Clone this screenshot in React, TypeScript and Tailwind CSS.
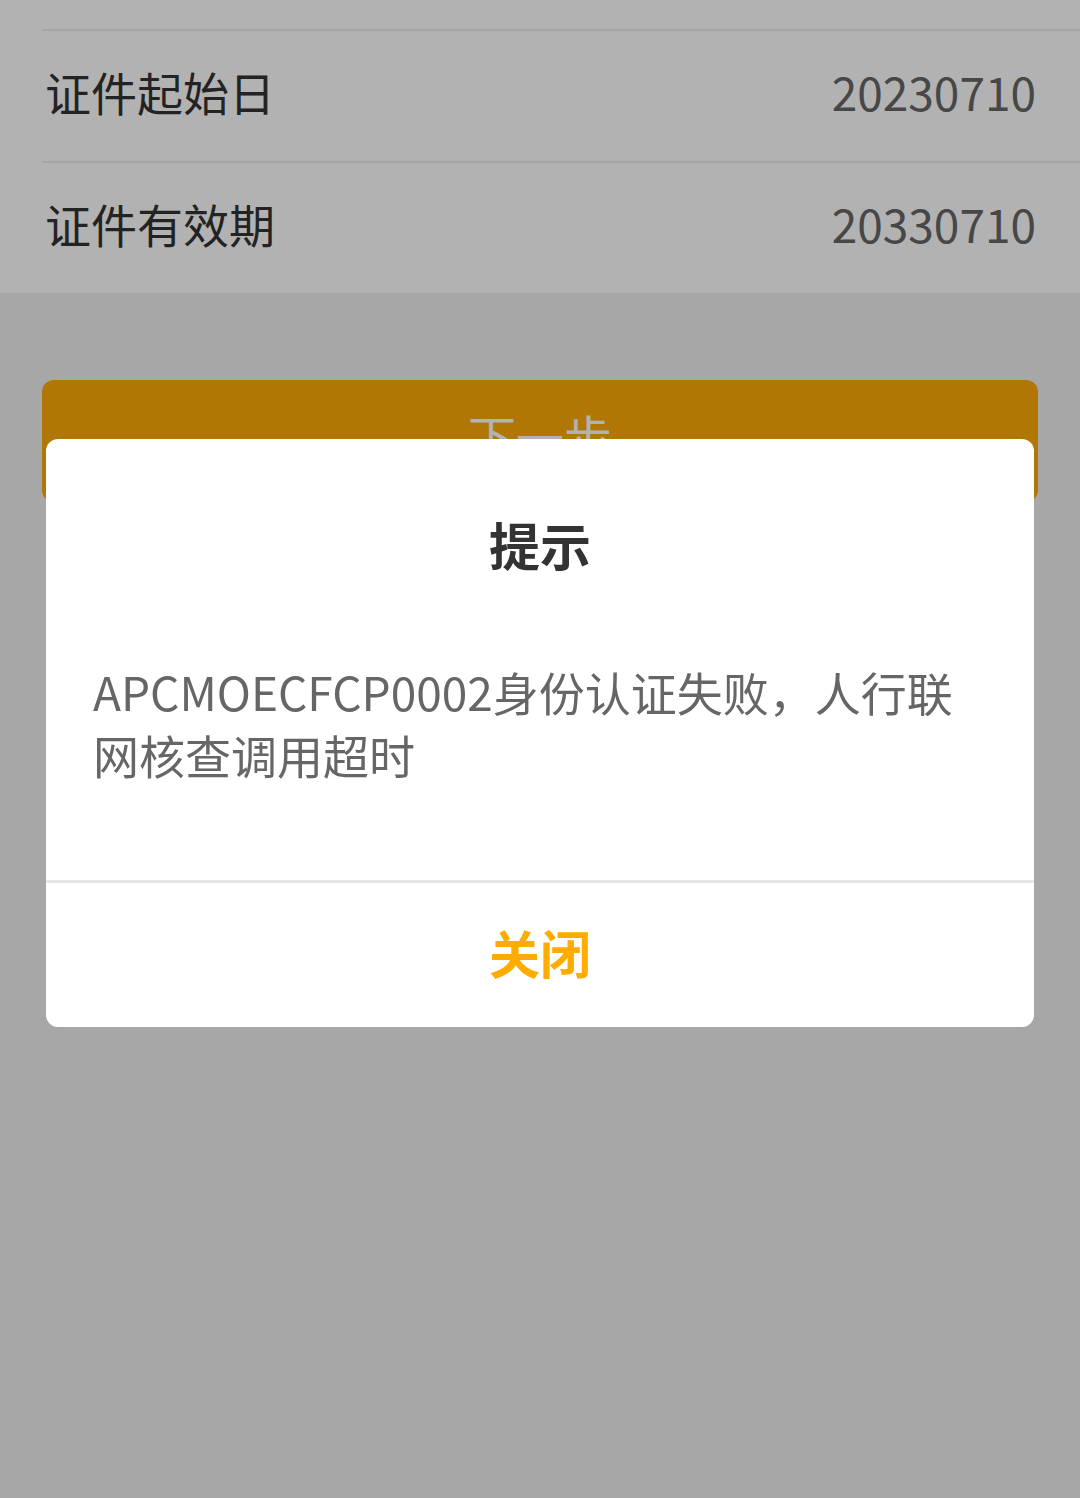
import React from "react"

const rows = [
  { label: "证件起始日", value: "20230710" },
  { label: "证件有效期", value: "20330710" },
]

export default function App() {
  return (
    <div
      className="relative min-h-screen bg-[#f0f0f0]"
      style={{ fontFamily: '"Noto Sans CJK SC", "Noto Sans", sans-serif' }}
    >
      {/* info list */}
      <div className="bg-white">
        <div className="h-[29px]" />
        {rows.map((row) => (
          <div key={row.label}>
            <div className="ml-[42px] h-[2px] bg-[#ededed]" />
            <div className="flex h-[130px] items-center justify-between pb-[10px] pl-[45px] pr-[44px]">
              <span className="text-[46px] text-[#333333]">{row.label}</span>
              <span className="text-[46px] text-[#666666]">{row.value}</span>
            </div>
          </div>
        ))}
      </div>

      <div className="px-[42px] pt-[87px]">
        <button className="flex h-[122px] w-full items-center justify-center rounded-[12px] bg-[#feab06] pb-[12px] text-[48px] text-white">
          下一步
        </button>
      </div>

      {/* mask + dialog */}
      <div className="fixed inset-0 bg-black/30">
        <div className="mx-auto mt-[439px] w-[988px] overflow-hidden rounded-[12px] bg-white">
          <div className="pt-[70px] text-center text-[51px] font-bold leading-[71px] text-[#333333]">
            提示
          </div>
          <p className="px-[47px] pt-[80px] pb-[94px] text-[46px] leading-[63px] text-[#666666]">
            APCMOECFCP0002身份认证失败，人行联网核查调用超时
          </p>
          <div className="h-[3px] bg-[#e6e6e6]" />
          <div className="flex h-[144px] items-center justify-center pb-[6px] text-[51px] font-bold text-[#ffab00]">
            关闭
          </div>
        </div>
      </div>
    </div>
  )
}
